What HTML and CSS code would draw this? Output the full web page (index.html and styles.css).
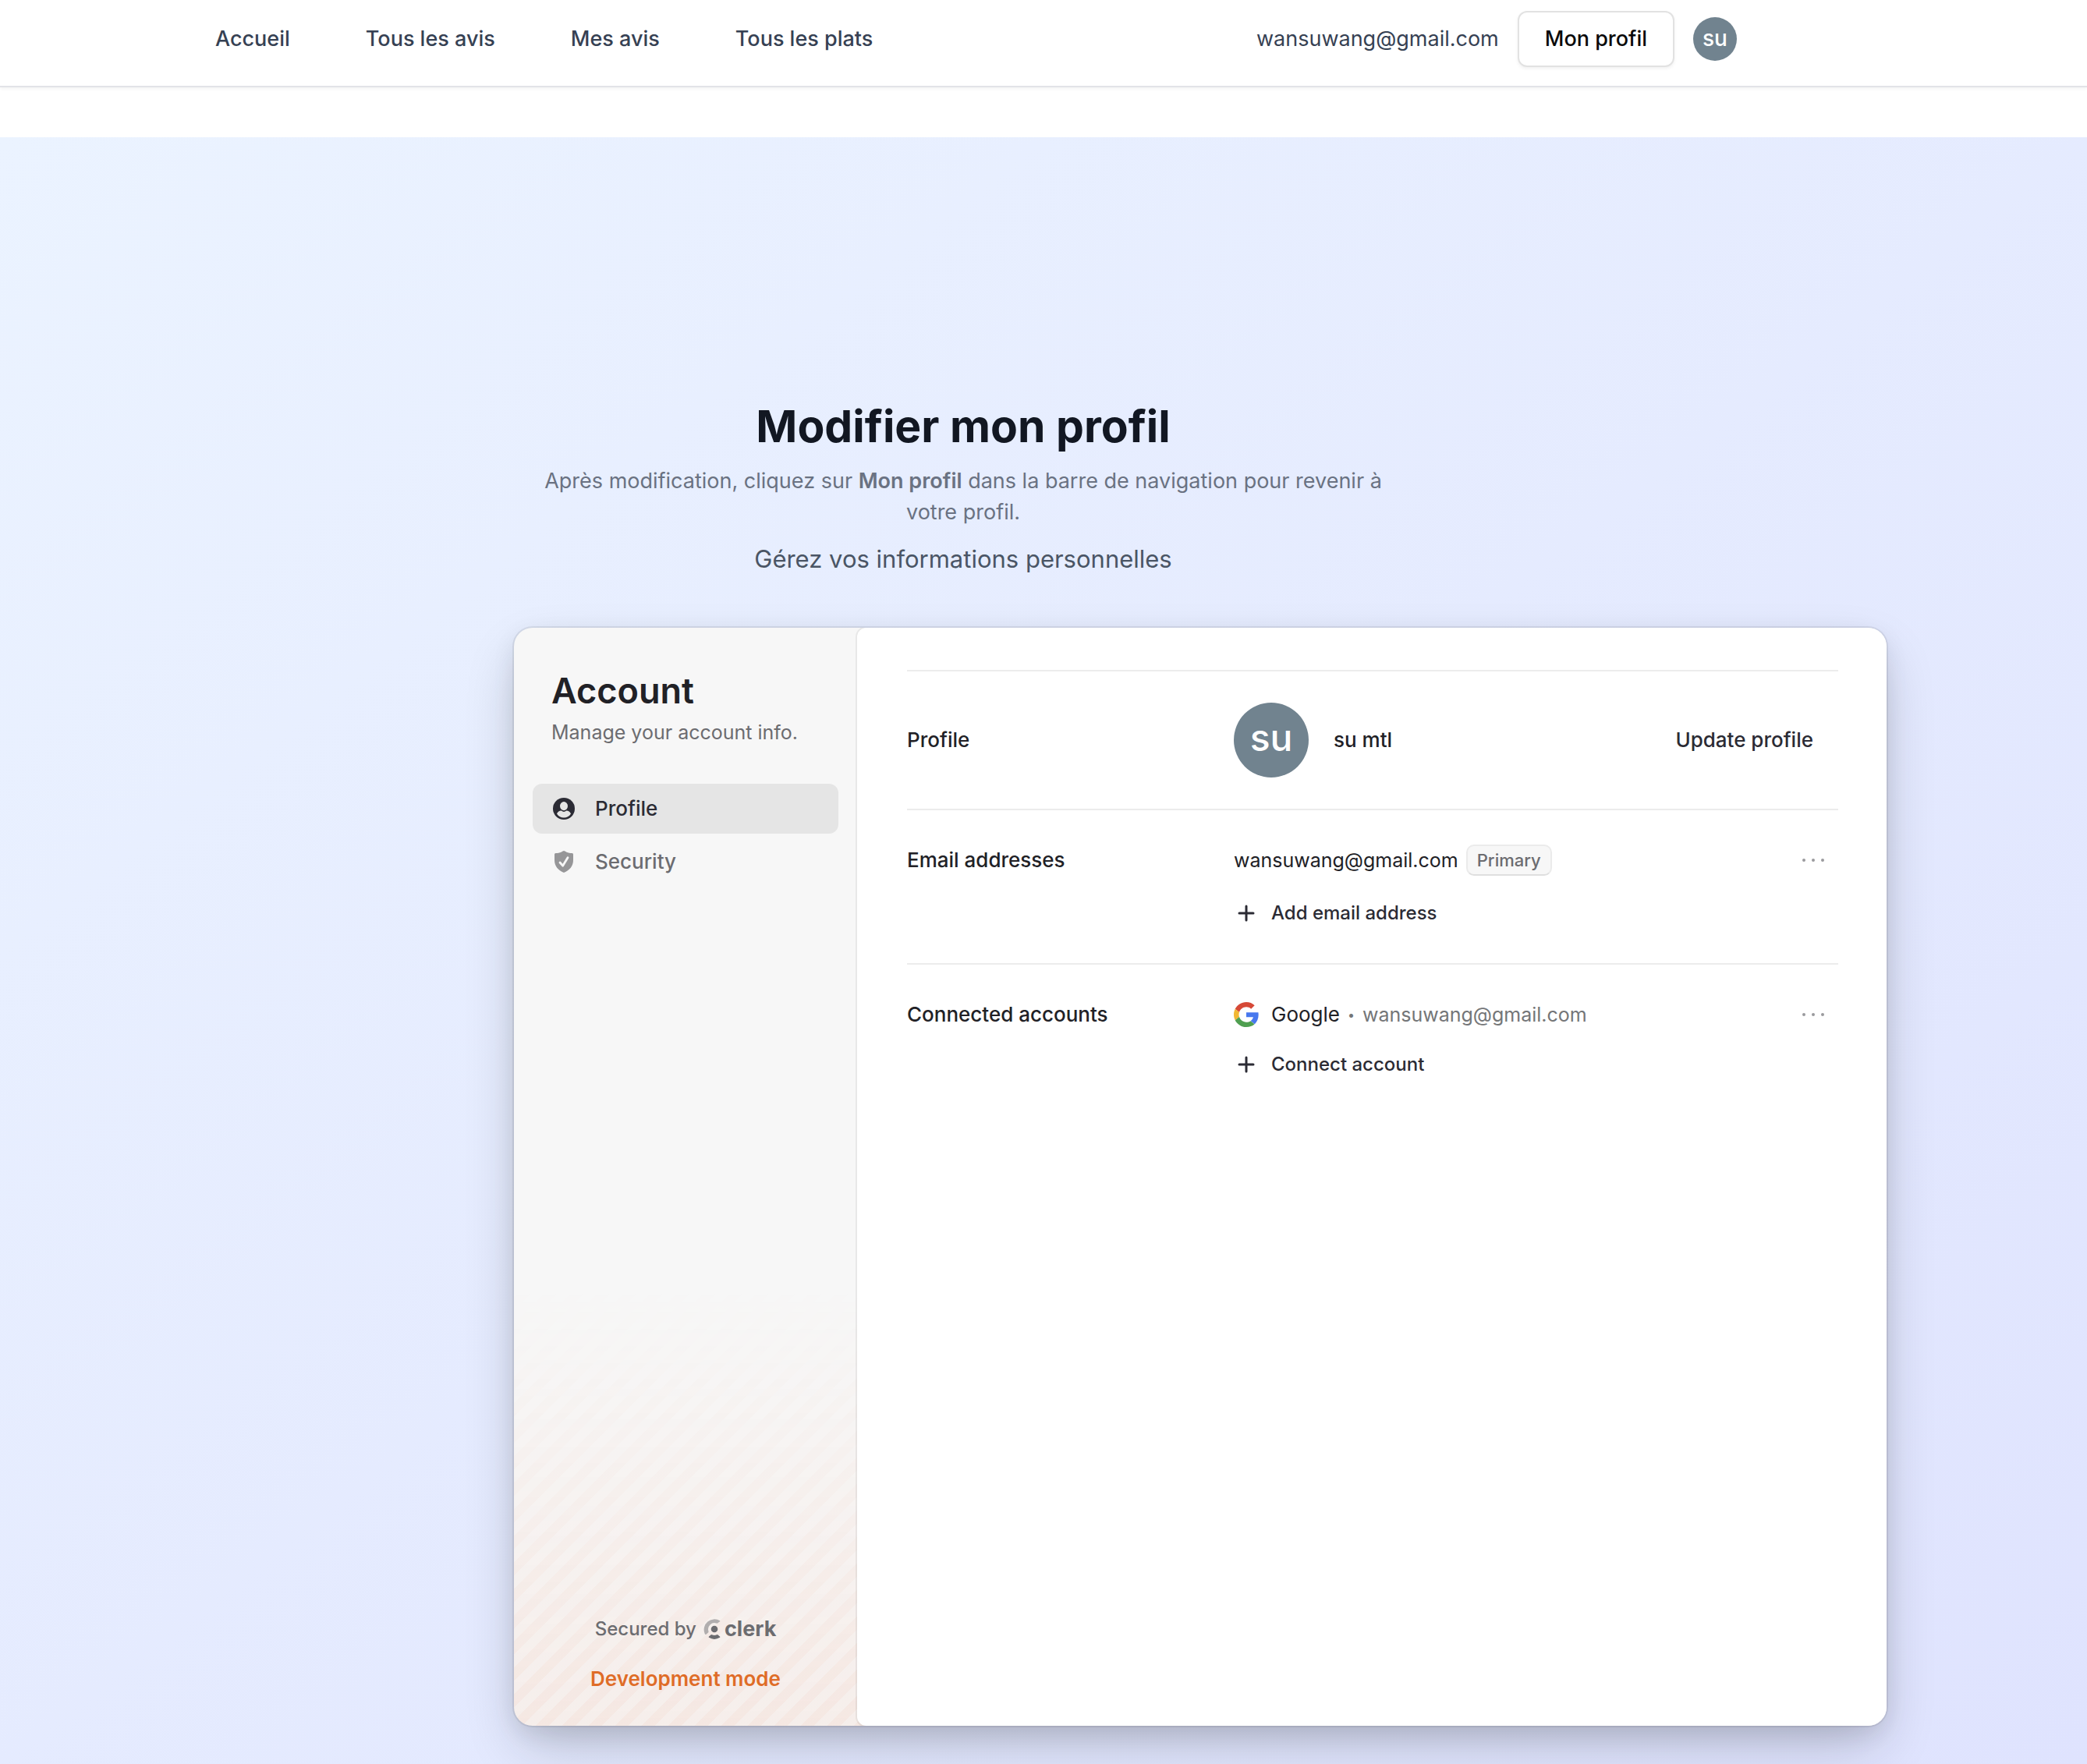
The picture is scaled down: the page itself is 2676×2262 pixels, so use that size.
FILE: index.html
```html
<!DOCTYPE html>
<html lang="fr">
<head>
<meta charset="utf-8">
<title>Modifier mon profil</title>
<link rel="stylesheet" href="styles.css">
</head>
<body>
<header class="topbar">
  <nav class="topnav">
    <a href="#">Accueil</a>
    <a href="#">Tous les avis</a>
    <a href="#">Mes avis</a>
    <a href="#">Tous les plats</a>
  </nav>
  <div class="session">
    <span class="session-email">wansuwang@gmail.com</span>
    <button class="profile-button" type="button">Mon profil</button>
    <button class="avatar avatar-small" type="button">su</button>
  </div>
</header>
<main class="page">
  <div class="content">
    <div class="intro">
      <h1>Modifier mon profil</h1>
      <p class="hint">Après modification, cliquez sur <strong>Mon profil</strong> dans la barre de navigation pour revenir à votre profil.</p>
      <p class="lead">Gérez vos informations personnelles</p>
    </div>
    <div class="card">
      <aside class="sidebar">
        <h2>Account</h2>
        <p class="sidebar-text">Manage your account info.</p>
        <nav class="side-nav">
          <button class="side-item active" type="button">
            <svg class="side-icon" viewBox="0 0 28 28"><circle cx="14" cy="14" r="14" fill="currentColor"/><ellipse cx="14" cy="10.6" rx="5" ry="5.6" fill="#e5e5e5"/><path d="M5 20.5c1.2-2.5 3.4-4 5.8-3.9 1 .9 2 1.300 3.200 1.300s2.200-.4 3.200-1.300c2.400-.1 4.600 1.400 5.800 3.900-2 3.300-5.400 5-9 5s-7-1.700-9-5z" fill="#e5e5e5"/></svg>
            Profile
          </button>
          <button class="side-item" type="button">
            <svg class="side-icon faded" viewBox="0 0 28 28"><path d="M14 0c1 0 1.600.8 3.500 1.700C19.500 2.600 22 3 24.500 3Q26 3 26 4.500V12c0 7.500-4.500 13-12 16C6.500 25 2 19.500 2 12V4.500Q2 3 3.500 3C6 3 8.500 2.600 10.500 1.700 12.400.8 13 0 14 0z" fill="currentColor"/><path d="M9 15l3.600 4.200L19 8.800" fill="none" stroke="#f7f7f7" stroke-width="2.800" stroke-linecap="round" stroke-linejoin="round"/></svg>
            Security
          </button>
        </nav>
        <footer class="side-footer">
          <div class="secured">
            <span>Secured by</span>
            <a class="clerk" href="#">
              <svg class="clerk-mark" viewBox="0 0 22 28"><path d="M21 3.200A13.500 13.500 0 0 0 1.600 19.800Q2.400 21.800 3.800 20.600L6 18.600Q6.800 17.800 6.400 16.600A8 8 0 0 1 16.600 6.600Q17.600 7 18.300 6.300L21 4.300Q21.600 3.700 21 3.200z" fill="currentColor" opacity=".5"/><circle cx="14" cy="14" r="4.300" fill="currentColor"/><path d="M21 24.800A13.500 13.500 0 0 1 7 24.800Q6.400 24.200 7 23.600L9.400 21.400Q10 20.900 10.800 21.300A8 8 0 0 0 17.200 21.300Q18 20.900 18.600 21.400L21 23.600Q21.600 24.200 21 24.800z" fill="currentColor"/></svg>clerk</a>
          </div>
          <p class="dev-mode">Development mode</p>
        </footer>
      </aside>
      <div class="panel">
        <section class="row row-profile">
          <h3>Profile</h3>
          <div class="entry">
            <span class="avatar avatar-large">su</span>
            <span class="name">su mtl</span>
            <button class="update" type="button">Update profile</button>
          </div>
        </section>
        <section class="row">
          <h3>Email addresses</h3>
          <div class="entries">
            <div class="entry">
              <span class="value">wansuwang@gmail.com</span>
              <span class="badge">Primary</span>
              <button class="more" type="button" aria-label="More"><svg class="dots" viewBox="0 0 28 4"><circle cx="2" cy="2" r="2"/><circle cx="14" cy="2" r="2"/><circle cx="26" cy="2" r="2"/></svg></button>
            </div>
            <button class="add" type="button"><svg class="plus" viewBox="0 0 32 32"><path d="M16 7v18M7 16h18"/></svg>Add email address</button>
          </div>
        </section>
        <section class="row">
          <h3>Connected accounts</h3>
          <div class="entries entries-tight">
            <div class="entry">
              <svg class="google" viewBox="0 0 48 48"><path fill="#d64937" d="M24 9.500c3.540 0 6.710 1.220 9.210 3.600l6.850-6.850C35.900 2.380 30.470 0 24 0 14.620 0 6.510 5.380 2.560 13.220l7.980 6.190C12.430 13.720 17.740 9.500 24 9.500z"/><path fill="#4878ee" d="M47.500 24.550c0-1.570-.15-3.090-.38-4.550H24v9.020h13.300c-.58 2.960-2.260 5.480-4.780 7.180l7.730 6c4.510-4.180 7.250-10.360 7.250-17.650z"/><path fill="#f2b732" d="M10.530 28.590c-.48-1.450-.76-2.990-.76-4.590s.27-3.140.76-4.590l-7.980-6.190C.92 16.460 0 20.120 0 24c0 3.880.92 7.540 2.560 10.780l7.970-6.190z"/><path fill="#4f9f50" d="M24 48c6.480 0 11.930-2.130 15.890-5.810l-7.730-6c-2.150 1.450-4.920 2.300-8.160 2.300-6.260 0-11.570-4.220-13.470-9.910l-7.980 6.190C6.510 42.620 14.620 48 24 48z"/></svg>
              <span class="provider">Google</span>
              <span class="bullet">•</span>
              <span class="value muted">wansuwang@gmail.com</span>
              <button class="more" type="button" aria-label="More"><svg class="dots" viewBox="0 0 28 4"><circle cx="2" cy="2" r="2"/><circle cx="14" cy="2" r="2"/><circle cx="26" cy="2" r="2"/></svg></button>
            </div>
            <button class="add" type="button"><svg class="plus" viewBox="0 0 32 32"><path d="M16 7v18M7 16h18"/></svg>Connect account</button>
          </div>
        </section>
      </div>
    </div>
  </div>
</main>
</body>
</html>
```
FILE: styles.css
```css
* {
  box-sizing: border-box;
}

body {
  margin: 0;
  background: #fff;
  font-family: Inter, "Liberation Sans", sans-serif;
  font-size: 26px;
  line-height: 36px;
  color: #212126;
}

h1, h2, h3, p {
  margin: 0;
}

button {
  margin: 0;
  padding: 0;
  border: 0;
  background: none;
  font: inherit;
  color: inherit;
  cursor: pointer;
}

a {
  color: inherit;
  text-decoration: none;
}

svg {
  display: block;
  flex: none;
}

/* Top bar */
.topbar {
  display: flex;
  align-items: center;
  justify-content: space-between;
  padding: 14px 449px 24px 276px;
  border-bottom: 2px solid #e2e3e8;
  box-shadow: 0 2px 4px rgba(0, 0, 0, .05);
  font-size: 27px;
  color: #364153;
}

.topnav {
  display: flex;
  gap: 97px;
  font-weight: 500;
}

.session {
  display: flex;
  align-items: center;
  gap: 24px;
}

.profile-button {
  height: 72px;
  padding: 0 33px;
  border: 2px solid #e2e2e2;
  border-radius: 12px;
  background: #fff;
  box-shadow: 0 2px 4px rgba(0, 0, 0, .06);
  font-weight: 500;
  color: #0a0a0a;
}

.avatar {
  display: flex;
  flex: none;
  align-items: center;
  justify-content: center;
  border-radius: 50%;
  background: #71838f;
  color: #fff;
}

.avatar-small {
  width: 56px;
  height: 56px;
  padding-bottom: 2px;
  font-size: 28px;
  font-weight: 500;
}

.avatar-large {
  width: 96px;
  height: 96px;
  padding-bottom: 6px;
  font-size: 48px;
  font-weight: 500;
}

/* Page */
.page {
  margin-top: 64px;
  padding: 335px 0 49px;
  background: linear-gradient(to bottom right, #ebf3ff, #dfe3fe);
}

.content {
  display: flex;
  flex-direction: column;
  gap: 64px;
  max-width: 1760px;
  margin-left: 659px;
}

.intro {
  max-width: 1152px;
  text-align: center;
}

.intro h1 {
  font-size: 57px;
  line-height: 72px;
  font-weight: 700;
  color: #121722;
}

.hint {
  margin-top: 14px;
  padding: 0 24px;
  font-size: 27px;
  line-height: 40px;
  color: #6a7282;
}

.hint strong {
  font-weight: 600;
}

.lead {
  margin-top: 16px;
  font-size: 31px;
  line-height: 48px;
  color: #4a5565;
}

/* Account card */
.card {
  display: grid;
  grid-template-columns: 440px 1fr;
  min-height: 1408px;
  overflow: hidden;
  border-radius: 24px;
  background: #f7f7f7;
  box-shadow: 0 10px 30px rgba(0, 0, 0, .08), 0 30px 70px -10px rgba(25, 28, 33, .24), 0 0 0 2px rgba(0, 0, 0, .07);
}

.sidebar {
  position: relative;
  display: flex;
  flex-direction: column;
  padding: 48px 24px 42px;
}

.sidebar::before {
  content: "";
  position: absolute;
  inset: 60% -12px 0 0;
  background: repeating-linear-gradient(-45deg, rgba(236, 104, 50, .1) 0 12px, rgba(236, 104, 50, .06) 12px 24px);
  mask-image: linear-gradient(transparent, #000);
}

.sidebar h2 {
  padding: 0 24px;
  font-size: 45px;
  line-height: 66px;
  font-weight: 600;
}

.sidebar-text {
  padding: 2px 24px;
  font-size: 25px;
  color: #6c6c70;
}

.side-nav {
  display: flex;
  flex-direction: column;
  gap: 4px;
  margin-top: 46px;
}

.side-item {
  display: flex;
  align-items: center;
  gap: 26px;
  height: 64px;
  padding: 0 26px;
  border-radius: 12px;
  font-weight: 500;
  color: #6c6c70;
}

.side-item.active {
  background: #e5e5e5;
  color: #2b2b34;
}

.side-icon {
  width: 28px;
  height: 28px;
}

.faded {
  color: #969698;
}

.side-footer {
  position: relative;
  display: flex;
  flex-direction: column;
  align-items: center;
  gap: 28px;
  margin-top: auto;
}

.secured {
  display: flex;
  align-items: center;
  gap: 9px;
  font-size: 24px;
  font-weight: 500;
  color: #6c6c70;
}

.clerk {
  display: flex;
  align-items: center;
  gap: 5px;
  font-size: 27px;
  font-weight: 700;
}

.clerk-mark {
  width: 22px;
  height: 28px;
}

.dev-mode {
  font-weight: 600;
  color: #df6c27;
}

.panel {
  position: relative;
  padding: 54px 62px 54px 64px;
  border-radius: 12px 0 0 12px;
  background: #fff;
  box-shadow: 0 0 0 2px rgba(0, 0, 0, .06);
}

.row {
  display: grid;
  grid-template-columns: 419px 1fr;
  padding: 44px 0 40px;
  border-top: 2px solid #ececec;
}

.row h3 {
  font-size: 26px;
  line-height: 40px;
  font-weight: 500;
}

.row-profile {
  align-items: center;
  padding: 40px 0;
}

.entries {
  display: flex;
  flex-direction: column;
  align-items: stretch;
  gap: 24px;
}

.entries-tight {
  gap: 20px;
}

.entry {
  display: flex;
  align-items: center;
  gap: 10px;
}

.value {
  font-size: 25px;
}

.name {
  margin-left: 22px;
  font-weight: 500;
}

.update {
  margin-left: auto;
  padding: 0 32px;
  font-weight: 500;
  color: #2b2b34;
}

.badge {
  height: 40px;
  padding: 0 12px;
  border: 2px solid #ebebeb;
  border-bottom-color: #dfdfdf;
  border-radius: 10px;
  background: #f7f7f7;
  font-size: 22px;
  font-weight: 500;
  color: #6c6c70;
}

.more {
  display: flex;
  align-items: center;
  height: 40px;
  margin-left: auto;
  padding: 0 18px;
}

.dots {
  width: 28px;
  height: 4px;
  fill: #9a9a9e;
}

.add {
  display: flex;
  align-items: center;
  align-self: flex-start;
  gap: 16px;
  height: 48px;
  font-size: 24px;
  font-weight: 500;
  color: #2b2b34;
}

.plus {
  width: 32px;
  height: 32px;
  fill: none;
  stroke: currentColor;
  stroke-width: 3;
  stroke-linecap: round;
}

.google {
  width: 32px;
  height: 32px;
}

.provider {
  margin-left: 6px;
}

.bullet {
  font-size: 16px;
  color: #747678;
}

.muted {
  color: #747678;
}
```
